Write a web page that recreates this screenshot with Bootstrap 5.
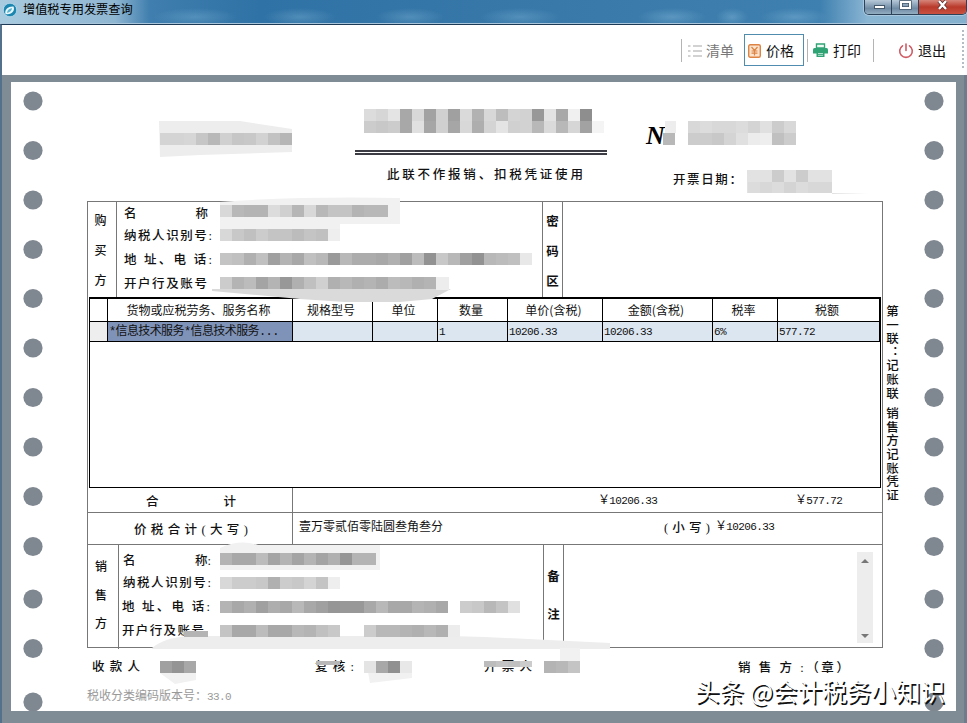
<!DOCTYPE html>
<html lang="zh-CN">
<head>
<meta charset="utf-8">
<meta name="viewport" content="width=device-width, initial-scale=1">
<title>增值税专用发票查询</title>
<link href="https://cdn.jsdelivr.net/npm/bootstrap@5.3.0/dist/css/bootstrap.min.css" rel="stylesheet">
<style>
:root{--steel:#7f8b95;--ink:#111;--line:#777}
body{width:967px;height:723px;overflow:hidden;background:var(--steel);color:var(--ink);font:12px/1 "Liberation Sans","Noto Sans CJK SC",sans-serif}
.titlebar{height:24px;border-bottom:1px solid #a9c6da;background:
 radial-gradient(ellipse 42px 9px at 195px 17px,#6ba3c988,#0000),radial-gradient(ellipse 36px 9px at 300px 17px,#6ba3c988,#0000),
 radial-gradient(ellipse 34px 9px at 410px 17px,#6ba3c988,#0000),radial-gradient(ellipse 40px 9px at 520px 17px,#6ba3c988,#0000),
 radial-gradient(ellipse 34px 9px at 672px 17px,#6ba3c9aa,#0000),radial-gradient(ellipse 16px 9px at 732px 17px,#6ba3c9aa,#0000),radial-gradient(ellipse 34px 9px at 795px 17px,#6ba3c9aa,#0000),
 linear-gradient(90deg,#a9cbe0 0,#8fb6d1 115px,#3f7eae 150px,#2f72a5 260px,#3a7aaa 600px,#3e80b0 820px,#8ab5d3 867px,#85b0ce 100%)}
.titlebar .caption{font-size:12.2px;color:#000;line-height:21px;padding-left:5px}
.winctl{width:103px;height:15px;border:1px solid #2c4258;border-top:0;border-radius:0 0 5px 5px;overflow:hidden;box-shadow:0 0 0 1px #c6dbea88}
.winctl span{width:27px;background:linear-gradient(#b7c9d8,#6f8ba4 60%,#93adc1);border-right:1px solid #2c4258}
.winctl .closer{width:48px;background:linear-gradient(#d7857a,#b93a2b 50%,#c9503f);border:0}
.toolbar{height:51px;background:#fff;border-top:1px solid #1c3a55;border-left:2px solid #53718b}
.toolbar .act{font-size:14px;height:32px;color:#111}
.toolbar .act.dim{color:#777}
.toolbar .price{width:60px;border:1px solid #4f8cad}
.toolbar .sep{width:1px;height:23px;background:#b4b4b4}
.grip{width:2px;height:40px;background:repeating-linear-gradient(#b5bcc4 0 2px,#fff 2px 4px)}
.frame{height:648px;padding:7px 11px 12px 9px;border-left:2px solid #53718b;box-shadow:inset -3px 0 #6d7d8b}
.paper{height:629px;background:#fff}
.holes{width:76px}
.holes.far{width:56px}
.holes svg{display:block}
.sheet{width:797px}
.kai{font-family:"Liberation Serif","Noto Sans CJK SC",serif;font-size:12.5px;font-weight:500;line-height:16px}
.spread{text-align-last:justify}
.mono{font-family:"Liberation Mono","Noto Sans CJK SC",monospace;font-size:11px;letter-spacing:-.6px}
.song{font-family:"Noto Sans CJK SC",sans-serif;font-size:12px}
.head{height:119px}
.head .leftpad{width:268px}
.head .mid{width:252px;padding-top:68px}
.head .rule{border-top:5px double #3c3c44}
.head .note{width:196px;margin:12px 0 0 32px}
.head .rest{padding:41px 0 0 39px}
.head .num{font:italic bold 26px/26px "Liberation Serif",serif;color:#000;height:49px}
.head .date{width:69px;margin-left:27px}
.form{border:1px solid var(--line);height:447px}
.party{height:95px}
.party.seller{height:104px}
.vlab{width:29px;border-right:1px solid var(--line)}
.seller .vlab{width:31px}
.vlab.kai{font-size:12px}
.vsec{width:21px;border:solid var(--line);border-width:0 1px;font-weight:700}
.fields{width:425px;padding:4px 0 0 7px}
.seller .fields{width:424px;padding:8px 0 0 4px}
.fields div{width:88px;height:16px}
.goods{height:191px;width:792px;margin-left:1px;border:1px solid #000;border-top-width:2px}
.goods table{table-layout:fixed;width:790px;border-collapse:separate;border-spacing:0}
.goods th,.goods td{padding:0;border:solid #000;border-width:0 1px 1px 0;height:23px;white-space:nowrap;overflow:hidden;line-height:18px}
.goods th{font-weight:400;text-align:center;padding-right:3px}
.goods td{height:20px;background:#dce6f0;padding-left:1px}
.goods td.name{background:#7f93b8;font-size:12px}
.goods td:first-child{background:#eee}
.sumrow{height:25px;border-bottom:1px solid var(--line)}
.caprow{height:32px;border-bottom:1px solid var(--line)}
.lcell{width:205px;border-right:1px solid var(--line)}
.scroller{width:16px;height:91px;background:#ededed;margin:7px 9px 0 auto;padding:6px 0 4px}
.foot{height:63px}
.foot .signs{height:41px;padding-top:11px}
.ver{color:#999}
.side{width:17px;padding-top:223px}
.side div{writing-mode:vertical-rl;text-orientation:upright;width:15px;font-size:12.5px;line-height:15px;letter-spacing:1.1px;word-spacing:-8px;white-space:nowrap}
.over{position:absolute;left:0;top:0;pointer-events:none}
.stamp{position:absolute;left:695px;top:679px;font:24.6px/22px "Noto Sans CJK SC",sans-serif;color:#fff;text-shadow:1.5px 1.5px 0 #111;white-space:nowrap}
</style>
<script src="https://cdn.jsdelivr.net/npm/bootstrap@5.3.0/dist/js/bootstrap.bundle.min.js"></script>
</head>
<body class="position-relative">
<header class="titlebar d-flex align-items-start">
  <svg width="18" height="18" viewBox="-2 -3 18 18"><circle cx="8" cy="7" r="6.7" fill="#1c86b0" stroke="#d6ebf5" stroke-width=".6"/><path d="M3.500 11C2 6 7 3 11.500 3.500C13.500 8 9 12.500 3.500 11Z" fill="#e8f7fc"/><path d="M5 10C5 7.500 7 5.500 10 5C10 7.500 8 9.500 5 10" fill="#5bb5d2"/></svg>
  <span class="caption">增值税专用发票查询</span>
  <div class="winctl d-flex ms-auto">
    <span><svg width="26" height="14"><rect x="9.500" y="5.500" width="10" height="3" fill="#fff" stroke="#44586b"/></svg></span>
    <span><svg width="26" height="14"><rect x="9" y="2" width="9" height="6" fill="none" stroke="#44586b" stroke-width="3.500"/><rect x="9" y="2" width="9" height="6" fill="none" stroke="#fff" stroke-width="2"/></svg></span>
    <span class="closer"><svg width="48" height="14"><path d="M20 1L27 9M27 1L20 9" stroke="#5d2a2a" stroke-width="4"/><path d="M20 1L27 9M27 1L20 9" stroke="#fff" stroke-width="2.400"/></svg></span>
  </div>
</header>

<nav class="toolbar d-flex align-items-center justify-content-end">
  <span class="sep"></span>
  <span class="act dim d-flex align-items-center" style="width:62px;padding:1px 0 0 6px">
    <svg width="14" height="14" class="me-1" stroke="#c4c4c4" stroke-width="1.300"><path d="M5 2H14M5 7H14M5 12H14M0 2H2.500M0 7H2.500M0 12H2.500"/></svg>清单</span>
  <span class="act price d-flex align-items-center" style="padding:1px 0 0 3px">
    <svg width="13" height="14" style="margin-right:5px" fill="none" stroke="#dd8444"><rect x=".7" y=".7" width="11.600" height="12.600" rx="1.500" fill="#fbe3ce" stroke-width="1.400"/><path d="M3.500 3L6.500 6.500L9.500 3M6.500 6.500V11.500M3.500 7H9.500M3.500 9.200H9.500" stroke-width="1.200"/></svg>价格</span>
  <span class="sep" style="margin-left:3px"></span>
  <span class="act d-flex align-items-center" style="width:65px;padding:1px 0 0 5px">
    <svg width="15" height="15" style="margin-right:5px"><path d="M3.500 1H11.500V5H3.500Z" fill="#fff" stroke="#2fa374" stroke-width="1.400"/><path d="M0 6.500Q0 5 1.500 5H13.500Q15 5 15 6.500V10.500H0Z" fill="#2fa374"/><path d="M3.500 9H11.500V14H3.500Z" fill="#2fa374"/><path d="M5 10.500H10M5 12.300H10M5 3H10" stroke="#d6f0e4" stroke-width=".8"/></svg>打印</span>
  <span class="sep"></span>
  <span class="act d-flex align-items-center" style="width:88px;padding:1px 0 0 24px">
    <svg width="16" height="16" class="me-1" fill="none" stroke="#cf5a64" stroke-width="1.600" stroke-linecap="round"><path d="M4.500 2.800A6.300 6.300 0 1 0 11.500 2.800M8 1V7.500"/></svg>退出</span>
  <span class="grip" style="margin-right:3px"></span>
</nav>

<main class="frame">
 <div class="paper d-flex">
  <div class="holes"><svg id="holesL" width="44" height="629"></svg></div>
  <div class="sheet">
    <div class="head d-flex">
      <div class="leftpad"></div>
      <div class="mid"><div class="rule"></div><div class="note kai spread">此联不作报销、扣税凭证使用</div></div>
      <div class="rest flex-grow-1"><div class="num">N</div><div class="date kai spread">开票日期：</div></div>
    </div>
    <div class="form">
      <div class="party d-flex">
        <div class="vlab kai d-flex flex-column align-items-center justify-content-between" style="padding:11px 3px 8px 0"><span>购</span><span>买</span><span>方</span></div>
        <div class="fields kai d-flex flex-column">
          <div class="spread" style="width:84px">名 称</div><div class="spread" style="margin-top:6px">纳税人识别号:</div><div class="spread" style="margin-top:8px">地 址、电 话:</div><div class="spread" style="margin-top:8px;width:83px">开户行及账号</div>
        </div>
        <div class="vsec kai d-flex flex-column align-items-center justify-content-between" style="padding:12px 0 7px"><span>密</span><span>码</span><span>区</span></div>
      </div>
      <div class="goods">
        <table class="song">
          <colgroup><col style="width:18px"><col style="width:185px"><col style="width:80px"><col style="width:65px"><col style="width:70px"><col style="width:95px"><col style="width:110px"><col style="width:65px"><col style="width:102px"></colgroup>
          <thead><tr><th></th><th>货物或应税劳务、服务名称</th><th>规格型号</th><th>单位</th><th>数量</th><th>单价(含税)</th><th>金额(含税)</th><th>税率</th><th>税额</th></tr></thead>
          <tbody><tr><td></td><td class="name mono">*信息技术服务*信息技术服务...</td><td></td><td></td><td class="mono">1</td><td class="mono">10206.33</td><td class="mono">10206.33</td><td class="mono">6%</td><td class="mono">577.72</td></tr></tbody>
        </table>
      </div>
      <div class="sumrow d-flex align-items-center">
        <div class="lcell kai h-100 d-flex align-items-center" style="padding:3px 0 0 58px"><span class="spread" style="width:90px">合 计</span></div>
        <div class="mono" style="margin:-1px 0 0 305px;width:197px"><span class="song">￥</span>10206.33</div><div class="mono" style="margin-top:-1px"><span class="song">￥</span>577.72</div>
      </div>
      <div class="caprow d-flex">
        <div class="lcell kai d-flex align-items-center" style="padding:2px 0 0 46px"><span class="spread" style="width:114px">价税合计(大写)</span></div>
        <div class="song" style="padding:7px 0 0 6px;width:369px">壹万零贰佰零陆圆叁角叁分</div>
        <div class="kai spread" style="width:46px;margin:7px 5px 0 2px">(小写)</div>
        <div class="mono" style="padding-top:6px"><span class="song">￥</span>10206.33</div>
      </div>
      <div class="party seller d-flex">
        <div class="vlab kai d-flex flex-column align-items-center justify-content-between" style="padding:14px 4px 17px 0"><span>销</span><span>售</span><span>方</span></div>
        <div class="fields kai">
          <div class="d-flex justify-content-between"><span>名</span><span>称:</span></div><div class="spread" style="margin-top:6px">纳税人识别号:</div><div class="spread" style="margin-top:8px;margin-left:-1px">地 址、电 话:</div><div class="spread" style="margin-top:8px;margin-left:-1px;width:82px">开户行及账号</div>
        </div>
        <div class="vsec kai d-flex flex-column align-items-center justify-content-between" style="padding:24px 0 26px"><span>备</span><span>注</span></div>
        <div class="flex-grow-1"><div class="scroller d-flex flex-column justify-content-between align-items-center"><svg width="8" height="5"><path d="M0 5L4 1L8 5" fill="#777"/></svg><svg width="8" height="5"><path d="M0 0L4 4L8 0" fill="#777"/></svg></div></div>
      </div>
    </div>
    <div class="foot">
      <div class="signs kai d-flex" style="padding-left:5px">
        <span class="spread" style="width:48px">收款人</span><span class="spread" style="width:39px;margin-left:175px">复核:</span><span class="spread" style="width:48px;margin-left:130px">开票人</span><span class="spread" style="width:111px;margin:1px 0 0 206px;white-space:nowrap">销 售 方 :（章）</span>
      </div>
      <div class="ver mono"><span class="song" style="letter-spacing:0">税收分类编码版本号：</span>33.0</div>
    </div>
  </div>
  <div class="side kai"><div>第一联：记账联 销售方记账凭证</div></div>
  <div class="holes far ms-auto"><svg id="holesR" width="54" height="629"></svg></div>
 </div>
</main>

<svg class="over" id="redact" width="967" height="723">
  <g fill="#ededed">
    <path d="M159 121H240L292 129V152L200 155L160 157Z"/><path d="M665 121H676V133H665Z"/><path d="M747 170H832V193H747Z M832 193L868 194H832Z" fill="#e2e2e2"/>
    <path d="M220 202Q300 196 400 198V224H220ZM220 224H340V229H220Z" fill="#f1f1f1"/>
    <path d="M212 289H451L432 299L400 302H345L300 299L212 291Z" fill="#dadada"/><path d="M436 277H449V290H436Z"/>
    <path d="M220 548Q240 539 258 545H380V570H220Z" fill="#f1f1f1"/>
    <path d="M152 648Q165 637 190 636H450L485 637L610 643V649H152Z"/>
    <path d="M160 673H196V680L175 684ZM366 661H412V678L370 683ZM560 648H580V661H560Z" fill="#f1f1f1"/>
  </g>
</svg>
<div class="stamp">头条 @会计税务小知识</div>

<script>
const NS='http://www.w3.org/2000/svg';
const put=(host,tag,attrs)=>{const e=document.createElementNS(NS,tag);for(const k in attrs)e.setAttribute(k,attrs[k]);host.appendChild(e);};
[101,150.500,200,249.500,298.500,348,397.500,447,496.500,546.500,599,648.500,702].forEach(y=>{
  put(holesL,'circle',{cx:22,cy:y-82,r:9.6,fill:'#7f8790'});
  put(holesR,'circle',{cx:34,cy:y-82,r:9.6,fill:'#7f8790'});
});
/* x, y, height, grey level of each 12px cell */
[[364,109,12,'dc d6 e4 a8 d8 a2 d0 a0 da b2 d8 bd d4 d2 98 e2 a8 f0 8e'],
 [364,121,12,'cc c8 cc a8 e0 a6 d0 a6 d8 ae d4 e4 d0 d2 b8 da b8 d6 a2 f4'],
 [160,133,12,'d4 d4 d6 c6 b8 d0 c6 c8 d2 c2 b6'],
 [663,133,12,'b8'],[688,121,12,'d8 dc d8 d8 dc d4 e0 cc d8'],[688,133,12,'cc cc c8 d4 e0 ec ee c0 cc'],
 [772,170,12,'cc'],[796,170,12,'cc'],[748,182,11,'dc d8 dc d4 dc d8 d8'],
 [220,205,12,'d8 b8 b4 b4 dc d0 b6 d8 b8 c4 c4 b4 b8 b8'],
 [220,229,12,'d8 c8 c0 cc c4 c4 bc c4 c0 ee'],
 [220,253,12,'c4 c0 b0 c0 a0 b4 a8 c0 b8 9a b8 ac ac a8 b0 a0 bc 92 c8 b8 a0 92 b8 bc c0 e8'],
 [220,277,12,'cc b4 bc a4 b4 98 b0 c0 d0 b0 b8 b0 b4 ac bc b8 b0 b4'],
 [220,553,12,'b4 a8 a8 bc a4 b4 a4 b4 a4 b0 96 b4 b4'],
 [220,577,12,'d8 cc cc c8 b0 cc c8 d4 c4 ee'],
 [220,601,12,'b4 a8 b0 a0 ae a8 b8 a8 a0 96 98 98 a8 b8 a8 a8 b4 b0 a8'],
 [460,601,12,'cc c8 b8 c4 e0'],
 [220,625,12,'c4 a8 a8 bc a8 a8 b8 b4 c0 c8'],[364,625,12,'cc b8 b8 b4 b0 b8 b0 ec'],
 [184,631,6,'b4 b4'],[160,661,12,'a0 94 a8'],[364,661,12,'e4 a8 90 e8'],
 [316,661,4,'b8 b8'],[484,661,6,'bc c4 c0 cc'],[544,661,12,'b4 b8 c4']
].forEach(([x,y,h,s])=>s.split(' ').forEach((v,i)=>put(redact,'rect',{x:x+12*i,y,width:12,height:h,fill:'#'+v+v+v})));
</script>
</body>
</html>
